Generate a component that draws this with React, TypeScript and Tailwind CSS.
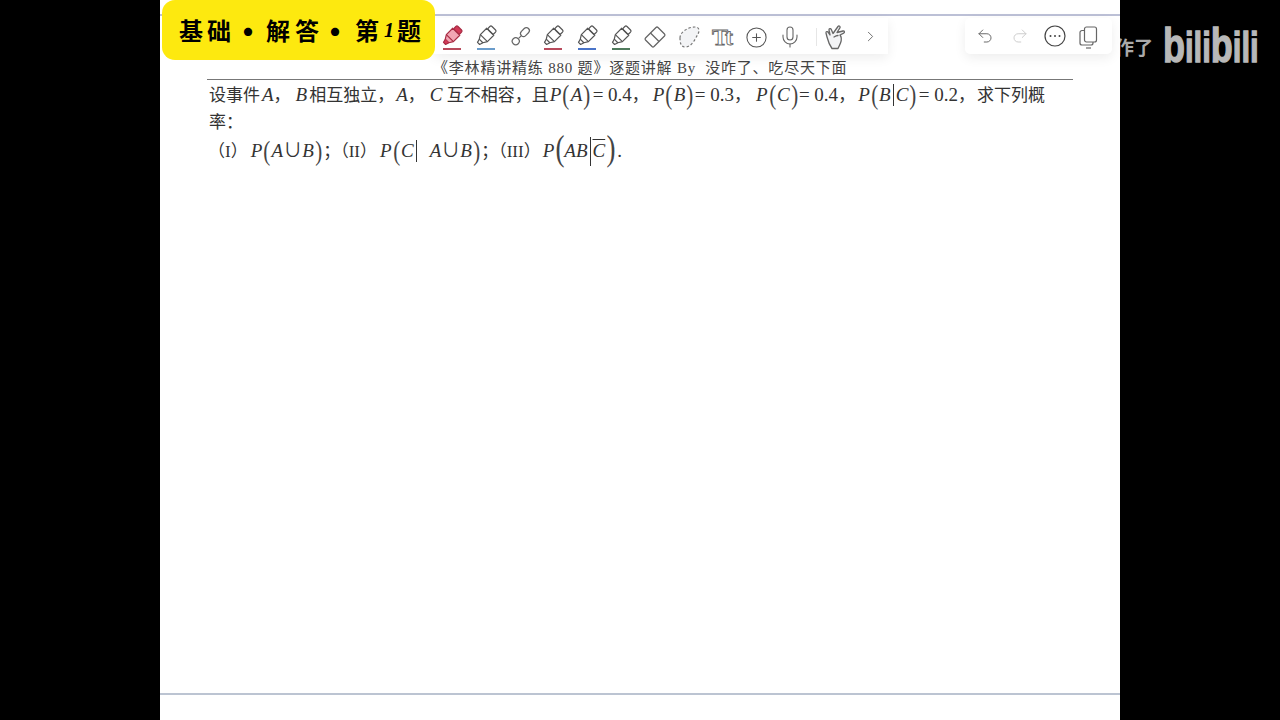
import { ChevronRight, CirclePlus, Mic, Redo2, Undo2 } from 'lucide-react';
import type { ReactNode } from 'react';

const serif = "font-['Liberation_Serif','Noto_Sans_CJK_SC',serif]";

// pen style tool, drawn upright and turned 45deg
function PenIcon({ fill = 'none', cap, line, stroke = '#555' }: { fill?: string; cap?: string; line?: string; stroke?: string }) {
  return (
    <div className="w-[34px] h-[36px] flex flex-col items-center">
      <svg width="24" height="24" viewBox="0 0 24 24" className="mt-[6px]" fill="none" stroke={stroke} strokeWidth="1.2" strokeLinejoin="round">
        <g transform="rotate(45 12 12)">
          <rect x="8" y="1" width="8" height="5" rx="1.5" fill={cap ?? fill} />
          <path d="M7 6h10v9l-2.5 4h-5L7 15z" fill={fill} />
          <path d="M9.5 19l1 3.5h3l1-3.5" fill={cap ?? 'none'} />
          <path d="M7 15h10" />
        </g>
      </svg>
      {line && <div className="w-[18px] h-[2px]" style={{ backgroundColor: line }} />}
    </div>
  );
}

function LinkPen() {
  return (
    <div className="w-[34px] h-[36px] flex justify-center">
      <svg width="24" height="24" viewBox="0 0 24 24" className="mt-[7px]" fill="none" stroke="#666" strokeWidth="1.2">
        <g transform="rotate(45 12 12)">
          <rect x="9" y="0" width="6" height="10" rx="3" />
          <path d="M12 10v4" />
          <circle cx="12" cy="18" r="3.5" />
        </g>
      </svg>
    </div>
  );
}

function Eraser() {
  return (
    <div className="w-[34px] h-[36px] flex justify-center">
      <svg width="24" height="24" viewBox="0 0 24 24" className="mt-[7px]" fill="none" stroke="#666" strokeWidth="1.3" strokeLinejoin="round">
        <path d="M2.500 13L13 2.500a1.500 1.500 0 0 1 2 0L21.500 9a1.500 1.500 0 0 1 0 2L11 21.500a1.500 1.500 0 0 1-2 0L2.500 15a1.500 1.500 0 0 1 0-2z" />
        <path d="M7.500 8l8.500 8.500" />
      </svg>
    </div>
  );
}

function Lasso() {
  return (
    <div className="w-[34px] h-[36px] flex justify-center">
      <svg width="24" height="24" viewBox="0 0 24 24" className="mt-[7px]" fill="#f3f4f6" stroke="#777" strokeWidth="1.2" strokeDasharray="2.5 2">
        <path d="M3 13c0-6 8-11 15-11 4 0 5 3 3 7-3 5-6 13-13 13-4 0-5-4-5-9z" />
      </svg>
    </div>
  );
}

function TextTool() {
  return (
    <div className="w-[34px] h-[36px] flex justify-center">
      <svg width="26" height="26" viewBox="0 0 26 26" className="mt-[6px]" fill="#fff" stroke="#666" strokeWidth="0.9">
        <text x="2" y="21" fontFamily="Liberation Serif" fontWeight="700" fontSize="24" textLength="21">Tt</text>
      </svg>
    </div>
  );
}

function HandTool() {
  return (
    <svg width="24" height="26" viewBox="0 0 24 26" fill="#f3f4f6" stroke="#666" strokeWidth="1.300" strokeLinejoin="round" strokeLinecap="round">
      <path d="M4 13l-1-4c-.3-1.400 1.500-2 2.200-.7L7 11 6 6c-.3-1.500 1.700-2 2.300-.6L10 9.500l5-7c1-1.300 2.800 0 1.900 1.400L14 8.500l6-1.500c1.500-.3 2 1.500.7 2.100L17 11c1.500 2 1.700 5 .5 8-1 2.500-2 4.500-2.500 5.500H9C6.500 21 5 17 4 13z" />
      <path d="M11 13c1.500-1 3-1.500 4-1.500" />
    </svg>
  );
}

function MoreIcon() {
  return (
    <svg width="22" height="22" viewBox="0 0 22 22" fill="none" stroke="#444" strokeWidth="1.200">
      <circle cx="11" cy="11" r="10" />
      <circle cx="6.500" cy="11" r="1" fill="#444" stroke="none" />
      <circle cx="11" cy="11" r="1" fill="#444" stroke="none" />
      <circle cx="15.500" cy="11" r="1" fill="#444" stroke="none" />
    </svg>
  );
}

function CopyIcon() {
  return (
    <svg width="19" height="23" viewBox="0 0 19 23" fill="none" stroke="#666" strokeWidth="1.200" strokeLinejoin="round">
      <rect x="5.500" y="1" width="12" height="15" rx="2" />
      <path d="M5.500 4.500H3a2 2 0 0 0-2 2V17a2 2 0 0 0 2 2h9a2 2 0 0 0 2-2v-1" />
      <path d="M7 22h5" />
    </svg>
  );
}

// math text is set larger than the chinese around it
function I({ children, className = '' }: { children: ReactNode; className?: string }) {
  return <span className={`italic text-[19px] ${className}`}>{children}</span>;
}

function N({ children, className = '' }: { children: ReactNode; className?: string }) {
  return <span className={`text-[19px] ${className}`}>{children}</span>;
}

// tall thin bracket
function B({ c, tall, className = '' }: { c: string; tall?: boolean; className?: string }) {
  return (
    <span className={`inline-block align-[-3px] leading-[0] text-[#444] ${tall ? 'text-[36px]' : 'text-[28px]'} scale-x-[0.75] ${className}`}>
      {c}
    </span>
  );
}

function Bar({ tall }: { tall?: boolean }) {
  return <span className={`inline-block w-[1px] bg-[#333] mx-[2px] ${tall ? 'h-[29px] align-[-9px]' : 'h-[22px] align-[-5px]'}`} />;
}

export default function App() {
  return (
    <div className="w-[1280px] h-[720px] bg-black flex overflow-hidden">
      <div className="w-[160px] shrink-0" />

      <main className={`relative w-[960px] h-[720px] shrink-0 bg-white flex flex-col text-[#333] ${serif}`}>
        <div className="mt-[14px] h-[2px] bg-[#bcc0d6]" />

        <div className="mt-[42px] pl-[273px] h-[20px] text-[15px] leading-[20px] tracking-[0.8px] text-[#444] whitespace-nowrap">
          《李林精讲精练 880 题》逐题讲解 By&nbsp; 没咋了、吃尽天下面
        </div>
        <div className="ml-[47px] w-[866px] h-[1px] bg-[#777] mt-[1px]" />

        <div className="pl-[49px] text-[17px] whitespace-nowrap">
          <div className="h-[30px] leading-[30px]">
            设事件<I className="ml-[2px]">A</I>，<I className="ml-[5px]">B</I><span className="ml-[2px]">相互独立，</span><I className="ml-[2px]">A</I>，<I className="ml-[5px]">C</I> 互不相容，且<I className="ml-[1px]">P</I>
            <B c="(" />
            <I>A</I>
            <B c=")" />
            <N className="ml-[1px]">= 0.4</N>，<I className="ml-[4px]">P</I>
            <B c="(" />
            <I>B</I>
            <B c=")" />
            <N>= 0.3</N>，<I className="ml-[5px]">P</I>
            <B c="(" />
            <I>C</I>
            <B c=")" />
            <N>= 0.4</N>，<I className="ml-[3px]">P</I>
            <B c="(" />
            <I>B</I>
            <Bar />
            <I>C</I>
            <B c=")" />
            <N className="ml-[1px]">= 0.2</N>，<span className="ml-[2px]">求下列概</span>
          </div>
          <div className="h-[26px] leading-[26px]">率：</div>
          <div className="h-[30px] leading-[30px]">
            <span className="-ml-[1px]">（I）</span>
            <I className="ml-[3px]">P</I>
            <B c="(" />
            <I>A</I>
            <N>∪</N>
            <I>B</I>
            <B c=")" />；<span>（II）</span>
            <I className="ml-[3px]">P</I>
            <B c="(" />
            <I>C</I>
            <Bar />
            <I className="ml-[11px]">A</I>
            <N>∪</N>
            <I>B</I>
            <B c=")" />；<span>（III）</span>
            <I className="ml-[2px]">P</I>
            <B c="(" tall className="-mr-[2px]" />
            <I>AB</I>
            <Bar tall />
            <I className="overline">C</I>
            <B c=")" tall />
            <N>.</N>
          </div>
        </div>

        <div className="mt-auto mb-[25px] h-[2px] bg-[#bcc4d2]" />

        {/* floating pen toolbar */}
        <div className="absolute left-[274px] top-[18px] w-[454px] h-[36px] bg-white shadow-[0_4px_12px_rgba(0,0,0,0.07)] flex items-start pl-[1px]">
          <PenIcon fill="#f2a6b4" cap="#d23a58" stroke="#a82c44" line="#b84a5c" />
          <PenIcon line="#6a9ccb" />
          <LinkPen />
          <PenIcon line="#b84a5c" />
          <PenIcon line="#4a74c8" />
          <PenIcon line="#4f7a5c" />
          <Eraser />
          <Lasso />
          <TextTool />
          <div className="w-[34px] h-[36px] flex justify-center pt-[8px]">
            <CirclePlus size={23} strokeWidth={1.100} color="#555" />
          </div>
          <div className="w-[34px] h-[36px] flex justify-center pt-[7px]">
            <Mic size={24} strokeWidth={1.100} color="#666" />
          </div>
          <div className="w-[1px] h-[18px] bg-[#e6e6e6] mt-[10px] ml-[9px]" />
          <div className="w-[34px] h-[36px] flex justify-center pt-[6px] ml-[1px]">
            <HandTool />
          </div>
          <div className="w-[36px] h-[36px] flex justify-center pt-[10px]">
            <ChevronRight size={17} strokeWidth={1.300} color="#666" />
          </div>
        </div>

        {/* undo / redo toolbar */}
        <div className="absolute left-[805px] top-[18px] w-[147px] h-[36px] bg-white rounded-[5px] shadow-[0_4px_12px_rgba(0,0,0,0.07)] flex items-start pl-[11px]">
          <Undo2 size={18} strokeWidth={1.300} color="#666" className="mt-[9px]" />
          <Redo2 size={18} strokeWidth={1.300} color="#ccc" className="mt-[9px] ml-[17px]" />
          <div className="mt-[7px] ml-[15px]">
            <MoreIcon />
          </div>
          <div className="mt-[8px] ml-[13px]">
            <CopyIcon />
          </div>
        </div>

        {/* title badge */}
        <div className="absolute left-[2px] top-0 w-[273px] h-[60px] rounded-[13px] bg-[#fde90f] flex items-center pl-[17px] text-[24px] font-bold text-black whitespace-nowrap font-['Noto_Sans_CJK_SC',sans-serif]">
          <span className="mr-[4px]">基</span>
          <span>础</span>
          <span className="inline-block w-[32px] ml-[1px] mr-[2px] text-center text-[32px] leading-none">•</span>
          <span className="mr-[5px]">解</span>
          <span>答</span>
          <span className="inline-block w-[32px] mr-[4px] text-center text-[32px] leading-none">•</span>
          <span>第</span>
          <span className={`italic ml-[5px] mr-[3px] text-[20px] ${serif}`}>1</span>
          <span>题</span>
        </div>
      </main>

      {/* bilibili watermark */}
      <aside className="flex-1 flex items-start pt-[20px]">
        <div className="w-[33px] h-[30px] mt-[12px] overflow-hidden flex justify-end text-[#a9a9a9] text-[19px] font-bold leading-[30px] whitespace-nowrap font-['Noto_Sans_CJK_SC',sans-serif]">
          作了
        </div>
        <div className="ml-[10px] mt-[4px] h-[44px] leading-[44px] font-bold text-[#b8b8b8] text-[31px] whitespace-nowrap scale-y-[1.35] [-webkit-text-stroke:1px_#b8b8b8] font-['Liberation_Sans',sans-serif]">
          <span className="text-[36px]">b</span>ili<span className="text-[36px]">b</span>ili
        </div>
      </aside>
    </div>
  );
}
